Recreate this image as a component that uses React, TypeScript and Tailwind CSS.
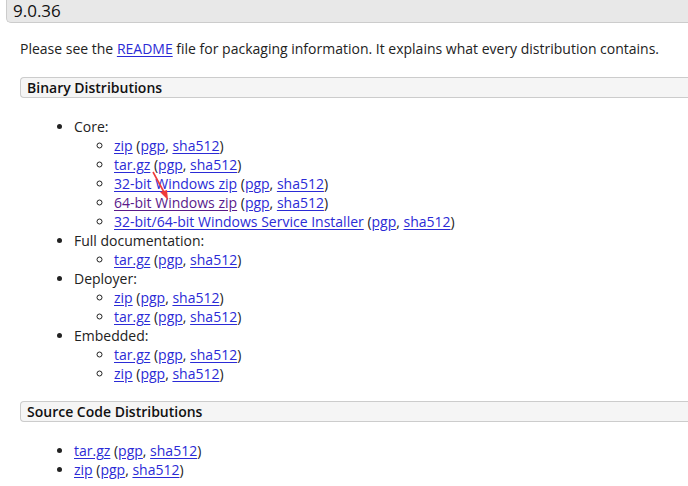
const link = 'text-[#2b2bd6] underline underline-offset-2';
const visited = 'text-[#5a1a8b] underline underline-offset-2';

type Item = { name: string; seen?: boolean };

function Links({ name, seen }: Item) {
  return (
    <>
      <a href="#" className={seen ? visited : link}>{name}</a> (
      <a href="#" className={link}>pgp</a>,{' '}
      <a href="#" className={link}>sha512</a>)
    </>
  );
}

const binary: { title: string; items: Item[] }[] = [
  {
    title: 'Core:',
    items: [
      { name: 'zip' },
      { name: 'tar.gz' },
      { name: '32-bit Windows zip' },
      { name: '64-bit Windows zip', seen: true },
      { name: '32-bit/64-bit Windows Service Installer' },
    ],
  },
  { title: 'Full documentation:', items: [{ name: 'tar.gz' }] },
  { title: 'Deployer:', items: [{ name: 'zip' }, { name: 'tar.gz' }] },
  { title: 'Embedded:', items: [{ name: 'tar.gz' }, { name: 'zip' }] },
];

function SectionBox({ title }: { title: string }) {
  return (
    <div className="ml-[20px] h-[21px] border border-r-0 border-[#cccccc] rounded-l-[4px] bg-[#f5f5f5] pl-[6px] text-[14px] leading-[19px] font-semibold text-[#111]">
      {title}
    </div>
  );
}

export default function App() {
  return (
    <div
      className="relative w-[688px] h-[486px] overflow-hidden bg-white text-[14px] leading-[19px] text-[#222]"
      style={{ fontFamily: '"Open Sans", "DejaVu Sans", sans-serif' }}
    >
      <div className="ml-[6px] h-[23px] border border-t-0 border-r-0 border-[#cccccc] rounded-bl-[5px] bg-[#e8e8e8] pl-[6px] text-[17px] leading-[22px] text-[#111]">
        9.0.36
      </div>

      <p className="mt-[16px] px-[20px]">
        Please see the <a href="#" className={link}>README</a> file for packaging information. It explains what every distribution contains.
      </p>

      <div className="mt-[19px]">
        <SectionBox title="Binary Distributions" />
      </div>

      <ul className="mt-[19px] ml-[20px] pl-[54px] list-disc">
        {binary.map((g) => (
          <li key={g.title}>
            {g.title}
            <ul className="pl-[40px] list-[circle]">
              {g.items.map((it, i) => (
                <li key={i}>
                  <Links {...it} />
                </li>
              ))}
            </ul>
          </li>
        ))}
      </ul>

      <div className="mt-[18px]">
        <SectionBox title="Source Code Distributions" />
      </div>

      <ul className="mt-[19px] ml-[20px] pl-[54px] list-disc">
        <li><Links name="tar.gz" /></li>
        <li><Links name="zip" /></li>
      </ul>

      <svg className="absolute left-0 top-0 pointer-events-none" width="688" height="486">
        <line x1="153" y1="172" x2="165" y2="194" stroke="#f03a3a" strokeWidth="1.6" />
        <polygon points="168,200 160,192 167,190" fill="#f03a3a" />
      </svg>
    </div>
  );
}
